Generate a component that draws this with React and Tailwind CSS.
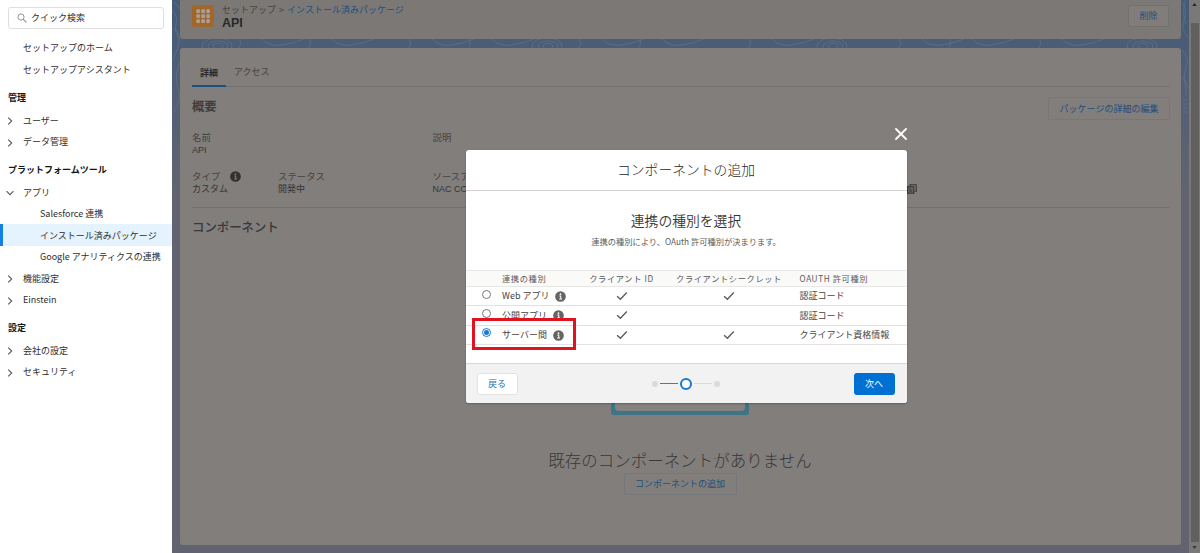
import React, { useState } from "react";

const Chevron = ({ open }) => (
    <svg viewBox="0 0 8 8" className={open ? "mt-[2px] w-2 h-2 shrink-0 rotate-90" : "mt-[2px] w-2 h-2 shrink-0"} fill="none" stroke="#57575a" strokeWidth="1.1">
        <path d="M2.2 0.6 L5.7 4 L2.2 7.4" />
    </svg>
);

const InfoIcon = ({ className, dot = "#fff" }) => (
    <svg viewBox="0 0 12 12" className={className}>
        <circle cx="6" cy="6" r="5.8" fill="currentColor" />
        <circle cx="6" cy="3.4" r="1" fill={dot} />
        <path d="M4.7 5.4h1.6v3.1M4.5 8.7h3.2" stroke={dot} strokeWidth="1.1" fill="none" />
    </svg>
);

const Check = () => (
    <svg viewBox="0 0 12 10" className="w-3 h-2.5 mx-auto" fill="none" stroke="#5c5b5a" strokeWidth="1.35">
        <path d="M1.1 5.2 L4.4 8.3 L10.8 1.5" />
    </svg>
);

const menu = [
    { type: "item", label: "セットアップのホーム" },
    { type: "item", label: "セットアップアシスタント" },
    { type: "heading", label: "管理" },
    { type: "group", label: "ユーザー" },
    { type: "group", label: "データ管理" },
    { type: "heading", label: "プラットフォームツール" },
    { type: "group", label: "アプリ", open: true },
    { type: "child", label: "Salesforce 連携" },
    { type: "child", label: "インストール済みパッケージ", active: true },
    { type: "child", label: "Google アナリティクスの連携" },
    { type: "group", label: "機能設定" },
    { type: "group", label: "Einstein" },
    { type: "heading", label: "設定" },
    { type: "group", label: "会社の設定" },
    { type: "group", label: "セキュリティ" },
];

const Sidebar = () => (
    <nav className="w-[172px] shrink-0 bg-white text-[9px] text-[#2f2e2d]">
        <div className="mt-[7px] mb-[8px] ml-2 flex h-[22px] w-[156px] items-center rounded-[3px] border border-[#dedede] pl-2">
            <svg viewBox="0 0 10 10" className="w-[10px] h-[10px] mr-[4px]" fill="none" stroke="#8c8a88">
                <circle cx="4" cy="4" r="3.1" strokeWidth="0.9" />
                <path d="M6.3 6.3 L9.4 9.4" strokeWidth="1.1" />
            </svg>
            <span>クイック検索</span>
        </div>
        {menu.map((m) => {
            if (m.type === "heading") {
                return (
                    <div key={m.label} className="flex h-[29px] items-center pl-2 pt-[6px] font-bold text-[#161616]">
                        {m.label}
                    </div>
                );
            }
            if (m.type === "group") {
                return (
                    <div key={m.label} className="flex h-[21.5px] items-center pl-[6px] pt-[1px]">
                        <Chevron open={m.open} />
                        <span className="ml-[9px]">{m.label}</span>
                    </div>
                );
            }
            if (m.type === "child") {
                return (
                    <div
                        key={m.label}
                        className={
                            m.active
                                ? "flex h-[21.5px] items-center whitespace-nowrap border-l-[3px] border-[#1580e4] bg-[#e4f3fe] pl-[37px] pt-[1px]"
                                : "flex h-[21.5px] items-center whitespace-nowrap pl-10 pt-[1px]"
                        }
                    >
                        {m.label}
                    </div>
                );
            }
            return (
                <div key={m.label} className="flex h-[21.5px] items-center pl-[23px]">
                    {m.label}
                </div>
            );
        })}
    </nav>
);

// contour lines of the page background
const Topography = () => (
    <svg className="absolute left-0 top-0" width="1017" height="130" fill="none" stroke="#687f93" strokeWidth="0.7" opacity="0.7">
        <path d="M0 10q6 6 4 14t4 16M1 28q8 4 6 14t-6 18M8 62q-6 14-2 26t-4 24M2 2q5 4 6 8" />
        {[45, 375, 660, 970].map((x) => (
            <g key={x}>
                <ellipse cx={x} cy="46" rx="15" ry="8" />
                <ellipse cx={x + 1} cy="46" rx="10" ry="5" />
                <ellipse cx={x + 1} cy="46" rx="5" ry="2.5" />
            </g>
        ))}
        {[90, 160, 260, 320, 430, 490, 600, 750, 800, 890].map((x) => (
            <path key={x} d={`M${x} 39q8 8 20 6t22-6M${x - 22} 39q2 6-2 10`} />
        ))}
        <path d="M1010 2q6 8 2 18t5 18M1014 0q-5 12 0 24M1010 50q8 8 4 18t3 20M1010 76q5 8 4 20M1011 100h4M1011 104h5M1011 108h4M1011 112h5" />
    </svg>
);

const AppIcon = () => (
    <svg viewBox="0 0 22 22" className="mt-[5px] w-[22px] h-[22px]">
        <rect width="22" height="22" rx="2.5" fill="#a36629" />
        {[4.3, 9.3, 14.3].map((y) =>
            [4.3, 9.3, 14.3].map((x) => <rect key={`${x}-${y}`} x={x} y={y} width="3.6" height="3.6" rx="0.6" fill="#a6a19b" />)
        )}
    </svg>
);

const Field = ({ label, value, className, info }) => (
    <div className={className}>
        <div className="flex h-[14px] items-center whitespace-nowrap text-[9.4px] text-[#454342]">
            {label}
            {info && <InfoIcon className="ml-[10px] mt-[1px] w-[11px] h-[11px] text-[#323130]" dot="#817e7c" />}
        </div>
        <div className="h-[13px] whitespace-nowrap font-['Liberation_Sans','Noto_Sans_CJK_JP',sans-serif] leading-[13px] text-[#353433]">{value}</div>
    </div>
);

const PackagePage = () => (
    <div className="relative flex-1 overflow-hidden bg-linear-to-b from-[#445a76] from-0% via-[#525f76] via-18% to-[#616470] to-35% pl-2 pr-2">
        <Topography />
        <div className="relative flex h-[39px] justify-between rounded-b-[3px] bg-[#7b7875] pl-3 pr-3">
            <div className="flex">
                <AppIcon />
                <div className="ml-2">
                    <div className="mt-[4px] h-[12px] text-[9px] leading-[12px] text-[#454443]">
                        セットアップ <span className="mx-[1px]">&gt;</span> <span className="text-[#234f7c]">インストール済みパッケージ</span>
                    </div>
                    <div className="font-['Liberation_Sans',sans-serif] text-[12.5px] font-bold leading-[14px] text-[#2a2928]">API</div>
                </div>
            </div>
            <button className="mt-[5px] h-[22px] w-[41px] rounded-[2px] border border-[#74726f] bg-[#807d7b] text-[9px] text-[#234f7c]">削除</button>
        </div>

        <div className="relative mt-[9px] h-[497px] rounded-[3px] bg-[#817e7c] pl-3 pr-[11px] text-[9px]">
            <div className="flex h-[39px] items-end border-b border-[#6e7274]">
                <div className="-mb-[1px] flex h-[29px] w-[34px] items-center justify-center border-b-2 border-[#1d4f80] pt-[2px] font-bold text-[#2a2928]">詳細</div>
                <div className="flex h-[28px] items-center pl-2 text-[#454342]">アクセス</div>
            </div>
            <div className="flex h-[42px] justify-between">
                <h2 className="mt-[10px] text-[12.3px] font-bold leading-[18px] text-[#3f3d3c]">概要</h2>
                <button className="mt-[10px] h-[23px] w-[122px] rounded-[2px] border border-[#75777a] text-[9px] text-[#234f7c]">パッケージの詳細の編集</button>
            </div>
            <div className="mt-[1px] flex h-[39px]">
                <Field label="名前" value="API" className="w-[240.5px]" />
                <Field label="説明" value="" />
            </div>
            <div className="flex h-[39px] border-b border-[#6e7071]">
                <Field label="タイプ" value="カスタム" className="w-[86px]" info />
                <Field label="ステータス" value="開発中" className="w-[154.5px]" />
                <Field label="ソースアクション" value="NAC CONNECT" className="w-[474.5px]" />
                <svg viewBox="0 0 10 10" className="mt-[15px] w-[10px] h-[10px]" fill="none" stroke="#373635" strokeWidth="1.1">
                    <path d="M3 2V0.8h6.2v6.5H7.6" />
                    <rect x="0.6" y="2.7" width="6.2" height="6.5" fill="#6a6765" />
                    <path d="M2.2 5h2M2.2 7h3" />
                </svg>
            </div>
            <h2 className="mt-[10px] text-[12.4px] font-medium leading-[18px] text-[#3a3938]">コンポーネント</h2>
            <div className="flex flex-col items-center pr-[2px]">
                <div className="mt-[80px] h-[99px] w-[138px] rounded-[2px] bg-[#3f7487] p-1">
                    <div className="h-full rounded-b-[4px] bg-[#85827f]" />
                </div>
                <div className="mt-[32px] text-[16.5px] font-light leading-[26px] text-[#3a3938]">既存のコンポーネントがありません</div>
                <button className="h-[22px] w-[113px] rounded-[2px] border border-[#75777a] text-[9px] text-[#234f7c]">コンポーネントの追加</button>
            </div>
        </div>
    </div>
);

const flows = [
    { name: "Web アプリ", clientId: true, secret: true, grant: "認証コード" },
    { name: "公開アプリ", clientId: true, secret: false, grant: "認証コード" },
    { name: "サーバー間", clientId: true, secret: true, grant: "クライアント資格情報" },
];

const AddComponentDialog = () => {
    const [selected, setSelected] = useState(2);

    return (
        <div className="absolute inset-0 flex justify-center pt-[150px]">
            <div className="relative flex h-[253px] w-[441px] flex-col rounded-[3px] bg-white text-[#444] shadow-[0_1px_2px_rgba(0,0,0,0.25)]">
                <button className="absolute -top-[23px] -right-[1px] p-[1px]">
                    <svg viewBox="0 0 12 12" className="w-3 h-3" stroke="#fff" strokeWidth="1.8" strokeLinecap="round">
                        <path d="M1 1 L11 11 M11 1 L1 11" />
                    </svg>
                </button>
                <div className="flex h-[41px] items-center justify-center border-b border-[#d4d2d1] pb-[2px] text-[13.8px] font-light text-[#2b2826]">
                    コンポーネントの追加
                </div>
                <div className="h-[79px] text-center">
                    <h3 className="mt-[19px] text-[13.8px] font-[350] leading-[20px] text-[#383533]">連携の種別を選択</h3>
                    <p className="mt-[5px] text-[8.25px] leading-[12px] text-[#5c5a58]">連携の種別により、OAuth 許可種別が決まります。</p>
                </div>

                <div className="relative">
                    <div className="grid h-[17px] grid-cols-[36px_74px_92px_123px_1fr] items-center border-y border-[#e8e7e6] bg-[#fafaf9] pb-[1px] text-[8.25px] tracking-[0.6px] text-[#5a5856]">
                        <span />
                        <span className="pl-[0.5px]">連携の種別</span>
                        <span className="text-center">クライアント ID</span>
                        <span className="text-center">クライアントシークレット</span>
                        <span className="pl-[9px]">OAUTH 許可種別</span>
                    </div>
                    {flows.map((flow, i) => (
                        <div key={flow.name} className="grid h-[19.3px] grid-cols-[36px_74px_92px_123px_1fr] items-center border-b border-[#e4e2e1] text-[9px] text-[#454342]">
                            <button
                                onClick={() => setSelected(i)}
                                className={
                                    selected === i
                                        ? "-mt-[4px] ml-4 flex h-[9px] w-[9px] items-center justify-center rounded-full border border-[#1678d8]"
                                        : "-mt-[4px] ml-4 h-[9px] w-[9px] rounded-full border border-[#777]"
                                }
                            >
                                {selected === i && <span className="h-[5px] w-[5px] rounded-full bg-[#1678d8]" />}
                            </button>
                            <span className="flex items-center whitespace-nowrap pl-[0.5px]">
                                {flow.name}
                                <InfoIcon className="ml-[6px] mt-[1px] w-[11px] h-[11px] text-[#666462]" />
                            </span>
                            <span>{flow.clientId && <Check />}</span>
                            <span>{flow.secret && <Check />}</span>
                            <span className="pl-[9px]">{flow.grant}</span>
                        </div>
                    ))}
                    <div className="absolute left-[6px] top-[48px] h-[32px] w-[104px] border-3 border-[#e01420]" />
                </div>

                <div className="mt-auto flex h-[40px] items-center justify-between rounded-b-[3px] border-t border-[#d9d7d6] bg-[#f3f2f2] pl-[11px] pr-[12px]">
                    <button className="h-[22px] w-[41px] rounded-[3px] border border-[#e4e2e1] bg-white text-[9px] text-[#1b72bd]">戻る</button>
                    <div className="flex items-center gap-[2px]">
                        <span className="h-[6px] w-[6px] rounded-full bg-[#dddbda]" />
                        <span className="h-[1px] w-[18px] bg-[#1589ee]" />
                        <span className="h-[12px] w-[12px] rounded-full border-[2.5px] border-[#1678d0] bg-white" />
                        <span className="h-[1px] w-[18px] bg-[#dddbda]" />
                        <span className="h-[6px] w-[6px] rounded-full bg-[#dddbda]" />
                    </div>
                    <button className="h-[22px] w-[41px] rounded-[3px] bg-[#0070d2] text-[9px] text-white">次へ</button>
                </div>
            </div>
        </div>
    );
};

const Scrollbar = () => (
    <div className="flex w-[11px] shrink-0 flex-col items-center bg-[#7b7977]">
        <svg viewBox="0 0 6 4" className="mt-[3px] w-[5px] h-[3px]">
            <path d="M0 4L3 0L6 4z" fill="#292827" />
        </svg>
        <div className="mt-[17px] w-[8px] flex-1 bg-[#62605e]" />
        <svg viewBox="0 0 6 4" className="my-[4px] w-[5px] h-[3px]">
            <path d="M0 0L3 4L6 0z" fill="#3a3938" />
        </svg>
    </div>
);

const App = () => {
    return (
        <div className="flex h-screen overflow-hidden font-['Noto_Sans_CJK_JP',sans-serif]">
            <Sidebar />
            <main className="relative flex min-w-0 flex-1">
                <PackagePage />
                <Scrollbar />
                <AddComponentDialog />
            </main>
        </div>
    );
};

export default App;
